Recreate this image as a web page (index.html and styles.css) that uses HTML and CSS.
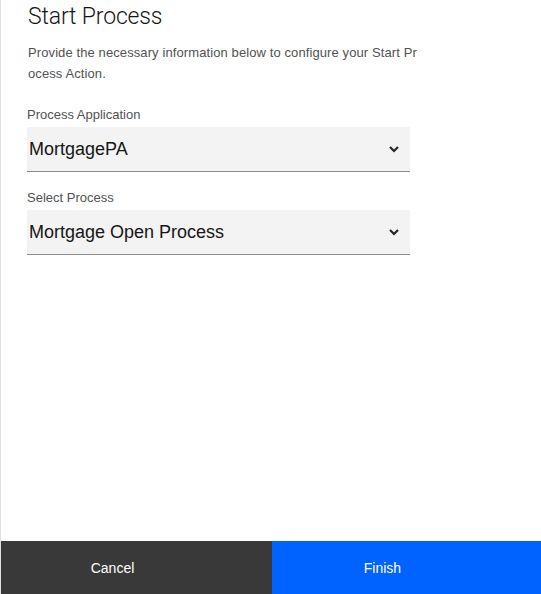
FILE: index.html
```html
<!DOCTYPE html>
<html>
<head>
<meta charset="utf-8">
<link rel="stylesheet" href="styles.css">
</head>
<body>
<div class="panel">
  <div class="content">
    <h1 class="title">Start Process</h1>
    <p class="desc">Provide the necessary information below to configure your Start Process Action.</p>
    <div class="field">
      <label class="label">Process Application</label>
      <div class="select">
        <span class="value">MortgagePA</span>
        <svg class="chev" width="12" height="8" viewBox="0 0 12 8"><path d="M2 2 L6 6 L10 2" fill="none" stroke="#262626" stroke-width="2.2"/></svg>
      </div>
    </div>
    <div class="field">
      <label class="label">Select Process</label>
      <div class="select">
        <span class="value">Mortgage Open Process</span>
        <svg class="chev" width="12" height="8" viewBox="0 0 12 8"><path d="M2 2 L6 6 L10 2" fill="none" stroke="#262626" stroke-width="2.2"/></svg>
      </div>
    </div>
  </div>
  <div class="footer">
    <button class="btn cancel">Cancel</button>
    <button class="btn finish">Finish</button>
  </div>
</div>
</body>
</html>
```

FILE: styles.css
```css
html, body {
  margin: 0;
  padding: 0;
  height: 100%;
  background: #fff;
}
body {
  font-family: "Liberation Sans", Arial, sans-serif;
  color: #161616;
}
.panel {
  height: 594px;
  display: flex;
  flex-direction: column;
  border-left: 1px solid #e0e0e0;
  box-sizing: border-box;
}
.content {
  flex: 1;
  padding: 0 0 0 26px;
}
.title {
  margin: 3px 0 0 1px;
  font-family: Roboto, "Liberation Sans", sans-serif;
  font-size: 23px;
  font-weight: 300;
  line-height: 28px;
  letter-spacing: -0.15px;
  color: #161616;
}
.desc {
  margin: 11px 0 0 1px;
  width: 392px;
  font-size: 13px;
  line-height: 21px;
  letter-spacing: 0.1px;
  color: #525252;
  word-break: break-all;
}
.field {
  margin-top: 23px;
}
.field + .field {
  margin-top: 18px;
}
.label {
  display: block;
  font-size: 13px;
  line-height: 16px;
  color: #525252;
}
.select {
  margin-top: 4px;
  width: 383px;
  height: 45px;
  box-sizing: border-box;
  background: #f3f3f3;
  border-bottom: 1px solid #8d8d8d;
  display: flex;
  align-items: center;
  justify-content: space-between;
  padding: 0 10px 0 2px;
}
.value {
  font-size: 18px;
  color: #161616;
}
.chev {
  display: block;
}
.footer {
  display: flex;
  height: 53px;
}
.btn {
  border: 0;
  margin: 0;
  font-family: "Liberation Sans", Arial, sans-serif;
  font-size: 14px;
  color: #fff;
  padding: 0 48px 0 0;
  text-align: center;
}
.cancel {
  flex: 0 0 271px;
  background: #393939;
}
.finish {
  flex: 1;
  background: #0062ff;
}
```
